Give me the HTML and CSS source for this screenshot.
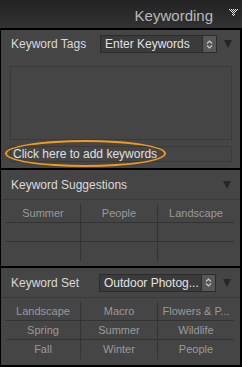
FILE: index.html
```html
<!DOCTYPE html>
<html lang="en">
<head>
  <meta charset="UTF-8" />
  <title>Keywording</title>
  <meta name="viewport" content="width=device-width, initial-scale=1" />
  <link rel="stylesheet" href="styles.css">
</head>
<body>
  <div class="module-head">
    <span class="module-title">Keywording</span>
    <svg class="module-toggle" width="9" height="7" viewBox="0 0 9 7">
      <g fill="#e6e6e6">
        <rect x="0" y="0" width="1" height="1"/><rect x="2" y="0" width="1" height="1"/><rect x="4" y="0" width="1" height="1"/><rect x="6" y="0" width="1" height="1"/><rect x="8" y="0" width="1" height="1"/>
        <rect x="1" y="1" width="1" height="1"/><rect x="3" y="1" width="1" height="1"/><rect x="5" y="1" width="1" height="1"/><rect x="7" y="1" width="1" height="1"/>
        <rect x="2" y="2" width="1" height="1"/><rect x="4" y="2" width="1" height="1"/><rect x="6" y="2" width="1" height="1"/>
        <rect x="3" y="3" width="1" height="1"/><rect x="5" y="3" width="1" height="1"/>
        <rect x="4" y="4" width="1" height="1"/>
        <rect x="3" y="5" width="1" height="1"/><rect x="5" y="5" width="1" height="1"/>
        <rect x="4" y="6" width="1" height="1"/>
      </g>
    </svg>
  </div>

  <div class="panel">
    <!-- Keyword Tags -->
    <section class="sect sect-tags">
      <div class="sect-head">
        <span class="sect-label">Keyword Tags</span>
        <div class="select">
          <span class="select-text">Enter Keywords</span>
          <span class="stepper">
            <svg width="7" height="11" viewBox="0 0 7 11"><path d="M1 4.5 L3.5 2 L6 4.5 M1 6.5 L3.5 9 L6 6.5" fill="none" stroke="#c8c8c8" stroke-width="1.2"/></svg>
          </span>
        </div>
        <span class="tri"></span>
      </div>
      <div class="tag-area"></div>
      <div class="add-row">Click here to add keywords</div>
      <div class="callout"></div>
    </section>

    <!-- Keyword Suggestions -->
    <section class="sect sect-suggest">
      <div class="sect-head sect-head-line">
        <span class="sect-label">Keyword Suggestions</span>
        <span class="tri"></span>
      </div>
      <div class="kw-grid">
        <span>Summer</span><span>People</span><span>Landscape</span>
        <span></span><span></span><span></span>
        <span></span><span></span><span></span>
      </div>
    </section>

    <!-- Keyword Set -->
    <section class="sect sect-set">
      <div class="sect-head sect-head-line">
        <span class="sect-label">Keyword Set</span>
        <div class="select">
          <span class="select-text">Outdoor Photog...</span>
          <span class="stepper">
            <svg width="7" height="11" viewBox="0 0 7 11"><path d="M1 4.5 L3.5 2 L6 4.5 M1 6.5 L3.5 9 L6 6.5" fill="none" stroke="#c8c8c8" stroke-width="1.2"/></svg>
          </span>
        </div>
        <span class="tri"></span>
      </div>
      <div class="kw-grid">
        <span>Landscape</span><span>Macro</span><span>Flowers &amp; P...</span>
        <span>Spring</span><span>Summer</span><span>Wildlife</span>
        <span>Fall</span><span>Winter</span><span>People</span>
      </div>
    </section>
  </div>
</body>
</html>
```

FILE: styles.css
```css
:root {
  --panel-bg: #454545;
  --line: #333333;
  --label: #dadada;
  --muted: #9a9a9a;
}

* {
  box-sizing: border-box;
  margin: 0;
  padding: 0;
}

body {
  font-family: 'Liberation Sans', Arial, sans-serif;
  background: #000;
  width: 242px;
  height: 367px;
  overflow: hidden;
}

.module-head {
  height: 28px;
  background: linear-gradient(#232323, #323232);
  display: flex;
  align-items: center;
  justify-content: flex-end;
  padding-right: 4px;
  gap: 16px;
}

.module-title {
  color: #b9b9b9;
  font-size: 15px;
  padding-top: 2px;
}

.module-toggle {
  margin-bottom: 4px;
}

.panel {
  border-top: 2px solid #000;
  border-left: 1px solid #000;
  border-right: 2px solid #000;
}

.sect {
  background: var(--panel-bg);
  border-bottom: 2px solid #000;
  position: relative;
}

.sect-tags {
  height: 140px;
  padding: 0 8px 0 9px;
}

.sect-suggest {
  height: 98px;
}

.sect-set {
  height: 99px;
}

.sect-head {
  height: 28px;
  display: flex;
  align-items: center;
  padding: 0 9px 0 10px;
}

.sect-tags .sect-head {
  padding: 0;
  padding-left: 1px;
}

.sect-head-line {
  height: 30px;
  border-bottom: 1px solid #3a3a3a;
}

.sect-label {
  color: var(--label);
  font-size: 12px;
  flex: 1;
}

.select {
  width: 117px;
  height: 18px;
  background: #3b3b3b;
  border: 1px solid #2c2c2c;
  display: flex;
  align-items: center;
  margin-right: 7px;
}

.select-text {
  flex: 1;
  color: #e2e2e2;
  font-size: 12px;
  padding-left: 4px;
  white-space: nowrap;
}

.stepper {
  width: 14px;
  height: 16px;
  background: #575757;
  border-left: 1px solid #2c2c2c;
  display: flex;
  align-items: center;
  justify-content: center;
}

.tri {
  width: 0;
  height: 0;
  border-left: 4px solid transparent;
  border-right: 4px solid transparent;
  border-top: 8px solid #262626;
}

.tag-area {
  margin-top: 8px;
  height: 74px;
  border: 1px solid #3a3a3a;
}

.add-row {
  margin-top: 6px;
  height: 16px;
  border: 1px solid #3a3a3a;
  color: #e0e0e0;
  font-size: 12px;
  line-height: 14px;
  padding-left: 2px;
}

.callout {
  position: absolute;
  left: 4px;
  top: 110px;
  width: 161px;
  height: 27px;
  border: 2px solid #f39a1c;
  border-radius: 50%;
}

.kw-grid {
  margin: 4px 6px 0 5px;
  display: grid;
  grid-template-columns: 75px 77px 1fr;
  grid-auto-rows: 19px;
}

.kw-grid span {
  color: var(--muted);
  font-size: 11px;
  text-align: center;
  line-height: 18px;
  border-bottom: 1px solid var(--line);
  white-space: nowrap;
  overflow: hidden;
}

.kw-grid span:nth-child(3n+1),
.kw-grid span:nth-child(3n+2) {
  border-right: 1px solid var(--line);
}

.kw-grid span:nth-last-child(-n+3) {
  border-bottom: none;
}
```
